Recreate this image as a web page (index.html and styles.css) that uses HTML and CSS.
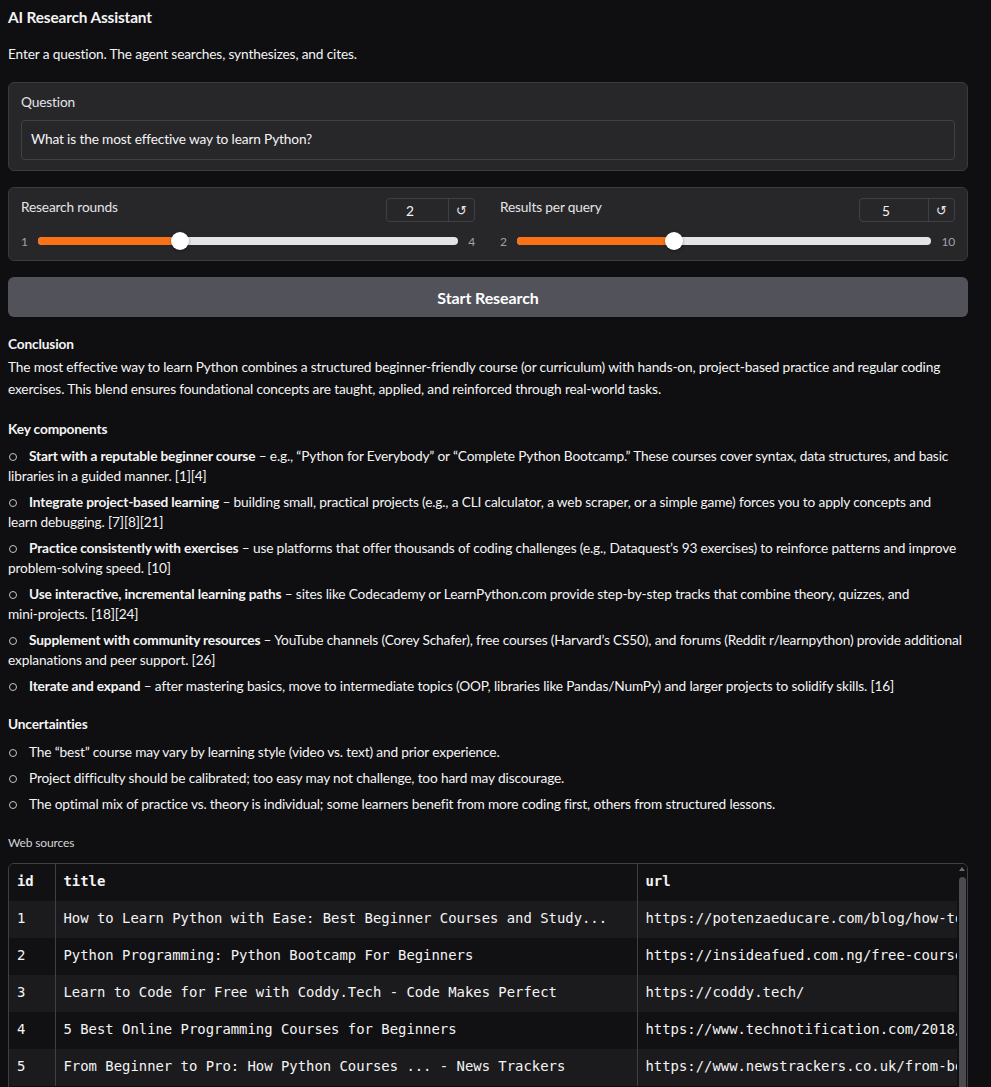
FILE: index.html
```html
<!DOCTYPE html>
<html lang="en">
<head>
<meta charset="utf-8">
<title>AI Research Assistant</title>
<link rel="stylesheet" href="styles.css">
</head>
<body>
<main class="app">
  <h1 class="title">AI Research Assistant</h1>
  <p class="desc">Enter a question. The agent searches, synthesizes, and cites.</p>

  <section class="panel question">
    <div class="label">Question</div>
    <div class="textbox">What is the most effective way to learn Python?</div>
  </section>

  <section class="panel sliders">
    <div class="slider">
      <div class="slider-head">
        <span class="label">Research rounds</span>
        <div class="num">
          <span class="num-val num-a">2</span>
          <span class="reset">&#8634;</span>
        </div>
      </div>
      <div class="slider-row">
        <span class="mm">1</span>
        <div class="track">
          <div class="fill" style="width:33.9%"></div>
          <div class="thumb" style="left:33.9%"></div>
        </div>
        <span class="mm">4</span>
      </div>
    </div>
    <div class="slider">
      <div class="slider-head">
        <span class="label">Results per query</span>
        <div class="num">
          <span class="num-val num-b">5</span>
          <span class="reset">&#8634;</span>
        </div>
      </div>
      <div class="slider-row">
        <span class="mm">2</span>
        <div class="track">
          <div class="fill" style="width:38%"></div>
          <div class="thumb" style="left:38%"></div>
        </div>
        <span class="mm">10</span>
      </div>
    </div>
  </section>

  <button class="run">Start Research</button>

  <article class="md">
    <p><strong>Conclusion</strong><br>The most effective way to learn Python combines a structured beginner-friendly course (or curriculum) with hands-on, project-based practice and regular coding exercises. This blend ensures foundational concepts are taught, applied, and reinforced through real-world tasks.</p>
    <p class="h"><strong>Key components</strong></p>
    <ul>
      <li><strong>Start with a reputable beginner course</strong> – e.g., “Python for Everybody” or “Complete Python Bootcamp.” These courses cover syntax, data structures, and basic libraries in a guided manner. [1][4]</li>
      <li><strong>Integrate project-based learning</strong> – building small, practical projects (e.g., a CLI calculator, a web scraper, or a simple game) forces you to apply concepts and <span class="nw">learn debugging.</span> [7][8][21]</li>
      <li><strong>Practice consistently with exercises</strong> – use platforms that offer thousands of coding challenges (e.g., Dataquest’s 93 exercises) to reinforce patterns and improve problem-solving speed. [10]</li>
      <li><strong>Use interactive, incremental learning paths</strong> – sites like Codecademy or LearnPython.com provide step-by-step tracks that combine theory, quizzes, and <span class="nw">mini-projects.</span> [18][24]</li>
      <li><strong>Supplement with community resources</strong> – YouTube channels (Corey Schafer), free courses (Harvard’s CS50), and forums (Reddit r/learnpython) provide additional explanations and peer support. [26]</li>
      <li><strong>Iterate and expand</strong> – after mastering basics, move to intermediate topics (OOP, libraries like Pandas/NumPy) and larger projects to solidify skills. [16]</li>
    </ul>
    <p class="h"><strong>Uncertainties</strong></p>
    <ul class="plain">
      <li>The “best” course may vary by learning style (video vs. text) and prior experience.</li>
      <li>Project difficulty should be calibrated; too easy may not challenge, too hard may discourage.</li>
      <li>The optimal mix of practice vs. theory is individual; some learners benefit from more coding first, others from structured lessons.</li>
    </ul>
  </article>

  <section class="sources">
    <div class="src-label">Web sources</div>
    <div class="grid-wrap">
      <div class="grid-scroll">
        <table class="grid">
          <colgroup>
            <col class="c-id">
            <col class="c-title">
            <col class="c-url">
          </colgroup>
          <thead>
            <tr><th>id</th><th>title</th><th>url</th></tr>
          </thead>
          <tbody>
            <tr><td>1</td><td>How to Learn Python with Ease: Best Beginner Courses and Study...</td><td>https://potenzaeducare.com/blog/how-to-learn-python</td></tr>
            <tr><td>2</td><td>Python Programming: Python Bootcamp For Beginners</td><td>https://insideafued.com.ng/free-course/python</td></tr>
            <tr><td>3</td><td>Learn to Code for Free with Coddy.Tech - Code Makes Perfect</td><td>https://coddy.tech/</td></tr>
            <tr><td>4</td><td>5 Best Online Programming Courses for Beginners</td><td>https://www.technotification.com/2018/</td></tr>
            <tr><td>5</td><td>From Beginner to Pro: How Python Courses ... - News Trackers</td><td>https://www.newstrackers.co.uk/from-beginner</td></tr>
          </tbody>
        </table>
      </div>
      <div class="vbar">
        <span class="vbar-up"></span>
        <span class="vbar-thumb"></span>
      </div>
    </div>
  </section>
</main>
</body>
</html>
```

FILE: styles.css
```css
* { box-sizing: border-box; }

html, body {
  margin: 0;
  padding: 0;
  background: #0f0f11;
}

body {
  font-family: Lato, "Noto Sans", sans-serif;
  color: #f4f4f5;
  font-size: 13.7px;
  letter-spacing: -0.15px;
}

.app {
  width: 960px;
  margin-left: 8px;
  padding-top: 7px;
  display: flex;
  flex-direction: column;
}

.title {
  margin: 0;
  font-size: 15.4px;
  line-height: 20px;
  font-weight: 700;
}

.desc {
  margin: 17px 0 0;
  line-height: 20px;
}

.panel {
  background: #27272a;
  border: 1px solid #3a3a3f;
  border-radius: 6px;
}

.question {
  margin-top: 18px;
  padding: 9px 12px 10px;
  display: flex;
  flex-direction: column;
  gap: 8px;
}

.label {
  color: #e4e4e7;
  line-height: 20px;
}

.textbox {
  height: 40px;
  border: 1px solid #3f3f46;
  border-radius: 4px;
  background: #27272a;
  padding: 0 9px 3px;
  display: flex;
  align-items: center;
}

.sliders {
  margin-top: 16px;
  padding: 10px 12px 9px;
  display: grid;
  grid-template-columns: 454px 455px;
  column-gap: 25px;
}

.slider-head {
  display: flex;
  justify-content: space-between;
  align-items: flex-start;
}

.slider-head .label { margin-top: -1px; }

.num {
  display: flex;
  height: 24px;
  border: 1px solid #3f3f46;
  border-radius: 4px;
}

.num-val {
  display: flex;
  align-items: center;
  justify-content: center;
  border-right: 1px solid #3f3f46;
}
.num-a { width: 62px; padding-right: 15px; }
.num-b { width: 69px; padding-right: 16px; }

.reset {
  width: 25px;
  display: flex;
  align-items: center;
  justify-content: center;
  font-family: "DejaVu Sans", sans-serif;
  font-size: 13px;
  letter-spacing: 0;
  color: #e4e4e7;
}

.slider-row {
  margin-top: 9px;
  height: 20px;
  display: flex;
  align-items: center;
  gap: 10px;
}

.mm {
  font-size: 12px;
  color: #a1a1aa;
}

.track {
  position: relative;
  flex: 1;
  height: 8px;
  border-radius: 4px;
  background: #e4e4e7;
}

.fill {
  height: 100%;
  border-radius: 4px;
  background: #f97316;
}

.thumb {
  position: absolute;
  top: 50%;
  width: 18px;
  height: 18px;
  margin: -9px 0 0 -9px;
  border-radius: 50%;
  background: #ffffff;
  box-shadow: 0 1px 3px rgba(0,0,0,0.35);
}

.run {
  margin-top: 16px;
  height: 40px;
  border: none;
  border-radius: 6px;
  background: #52525b;
  color: #ffffff;
  font-family: inherit;
  font-size: 16px;
  letter-spacing: -0.1px;
  font-weight: 700;
}

.md {
  margin-top: 16px;
}

.md p {
  margin: 0;
  line-height: 22.5px;
}

.md p.h { margin-top: 17px; }

.md ul {
  list-style: none;
  margin: 0;
  padding: 0;
}

.md li {
  margin-top: 6px;
  line-height: 20px;
}

.md ul.plain li { margin-top: 6px; }

.nw { white-space: nowrap; }

.md li::before {
  content: "";
  display: inline-block;
  width: 6px;
  height: 6px;
  border: 1.3px solid #c4c4c8;
  border-radius: 50%;
  margin: 0 12px 1px 1px;
  vertical-align: middle;
}

.sources {
  margin-top: 21px;
}

.src-label {
  font-size: 12px;
  line-height: 16px;
  color: #d4d4d8;
}

.grid-wrap {
  margin-top: 12px;
  height: 260px;
  display: flex;
  border: 1px solid #3f3f46;
  border-radius: 6px;
  overflow: hidden;
}

.grid-scroll {
  flex: 1;
  overflow: hidden;
}

.grid {
  width: 948px;
  table-layout: fixed;
  border-collapse: collapse;
  font-family: "DejaVu Sans Mono", "Liberation Mono", monospace;
  font-size: 13.9px;
  letter-spacing: 0;
  color: #f4f4f5;
}

.c-id { width: 46px; }
.c-title { width: 582px; }
.c-url { width: 320px; }

.grid th, .grid td {
  height: 37px;
  padding: 0 8px 2px;
  text-align: left;
  white-space: nowrap;
  overflow: hidden;
}

.grid th {
  font-weight: 700;
  background: #111113;
}

.grid th + th, .grid td + td {
  border-left: 1px solid #3f3f46;
}

.grid td:last-child, .grid th:last-child { text-overflow: clip; }

.grid tbody tr:nth-child(odd) td { background: #1b1b1e; }
.grid tbody tr:nth-child(even) td { background: #111113; }

.vbar {
  width: 10px;
  background: #111113;
  display: flex;
  flex-direction: column;
  align-items: center;
  padding-top: 3px;
}

.vbar-up {
  width: 0;
  height: 0;
  border-left: 3.5px solid transparent;
  border-right: 3.5px solid transparent;
  border-bottom: 4px solid #6b6b70;
}

.vbar-thumb {
  margin-top: 6px;
  width: 7px;
  flex: 1;
  border-radius: 4px;
  background: #4a4a4f;
}
```
